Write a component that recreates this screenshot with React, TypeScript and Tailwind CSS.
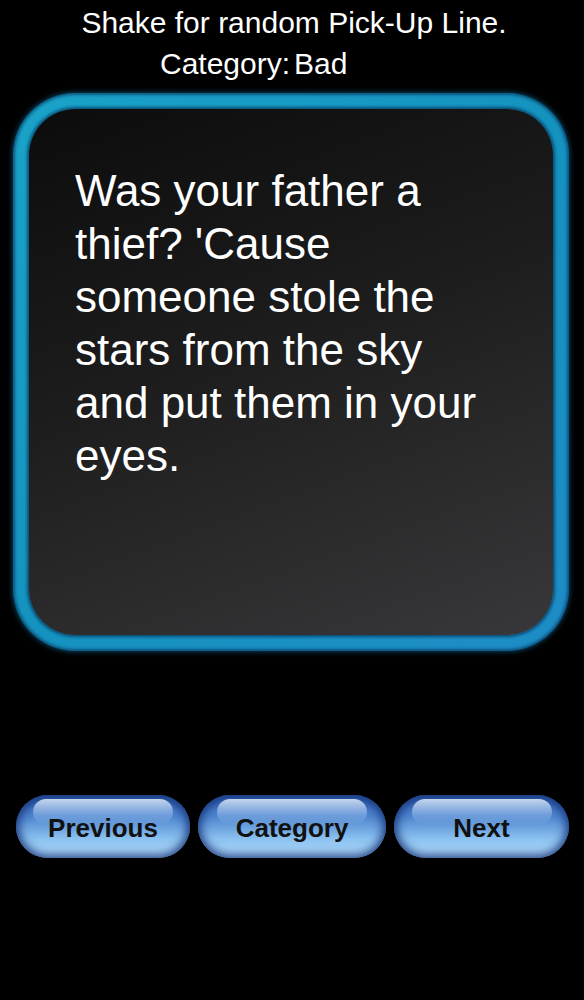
import React from "react";

const font = { fontFamily: '"Liberation Sans", Arial, sans-serif' };

function GlossButton({ label, w }: { label: string; w: string }) {
  return (
    <button
      className={`relative ${w} h-[63px] rounded-full overflow-hidden bg-[linear-gradient(180deg,#2f5fae_0%,#4f86cf_35%,#8cc2f0_70%,#b4dcfb_100%)] shadow-[inset_0_0_10px_3px_rgba(20,50,120,0.9)]`}
    >
      <span className="absolute left-[10%] right-[10%] top-[4px] h-[26px] rounded-full bg-[linear-gradient(180deg,rgba(225,238,252,0.85)_0%,rgba(160,195,240,0.45)_60%,rgba(120,170,230,0)_100%)]" />
      <span className="relative top-[2px] text-[26px] font-bold text-[#111]" style={font}>
        {label}
      </span>
    </button>
  );
}

export default function App() {
  return (
    <div className="w-[584px] h-[1000px] bg-black text-white overflow-hidden" style={font}>
      <div className="pt-[6px] text-center text-[30px] leading-[34px] pl-[4px]">Shake for random Pick-Up Line.</div>
      <div className="pt-[4px] pl-[160px] text-[30px] leading-[40px] flex gap-[4px]">
        <span>Category:</span>
        <span>Bad</span>
      </div>

      <div className="mt-[9px] ml-[13px] w-[556px] h-[558px] rounded-[62px] p-[16px] bg-[linear-gradient(135deg,#1aa3c9_0%,#1593bf_50%,#1e8cc6_100%)] shadow-[0_0_5px_1px_rgba(20,140,200,0.45),inset_0_0_3px_2px_rgba(0,40,80,0.6)]">
        <div className="w-full h-full rounded-[46px] bg-[linear-gradient(160deg,#0c0c0c_0%,#1d1d1e_45%,#38383a_100%)] shadow-[0_0_3px_2px_rgba(0,50,90,0.7)] pl-[46px] pt-[55px]">
          <p className="w-[412px] text-[44px] leading-[53px] text-white">
            Was your father a thief? 'Cause someone stole the stars from the sky and put them in your eyes.
          </p>
        </div>
      </div>

      <div className="mt-[144px] ml-[16px] flex gap-[8px]">
        <GlossButton label="Previous" w="w-[174px]" />
        <GlossButton label="Category" w="w-[188px]" />
        <GlossButton label="Next" w="w-[175px]" />
      </div>
    </div>
  );
}
